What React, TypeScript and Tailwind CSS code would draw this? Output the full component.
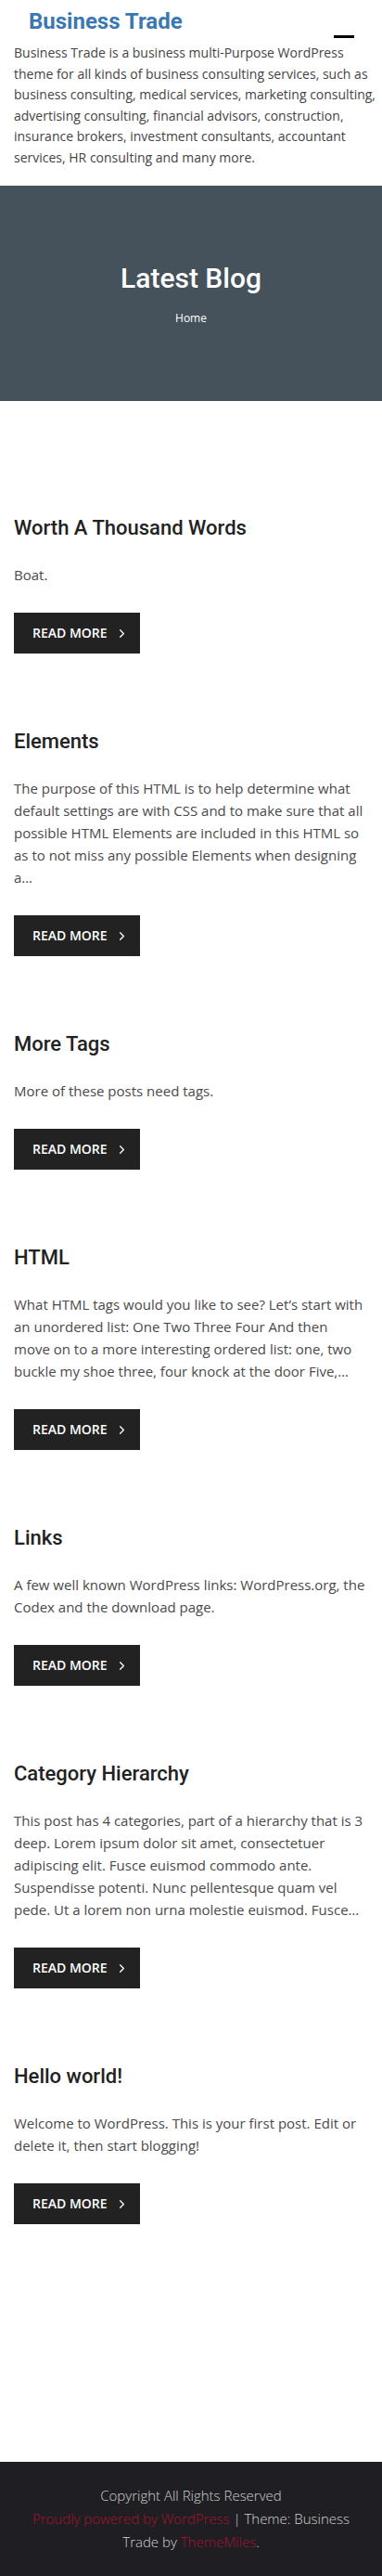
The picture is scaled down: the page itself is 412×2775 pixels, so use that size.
import React from 'react';
import { ChevronRight } from 'lucide-react';

interface Post {
  title: string;
  excerpt: string;
}

const posts: Post[] = [
  { title: 'Worth A Thousand Words', excerpt: 'Boat.' },
  {
    title: 'Elements',
    excerpt:
      'The purpose of this HTML is to help determine what default settings are with CSS and to make sure that all possible HTML Elements are included in this HTML so as to not miss any possible Elements when designing a…',
  },
  { title: 'More Tags', excerpt: 'More of these posts need tags.' },
  {
    title: 'HTML',
    excerpt:
      'What HTML tags would you like to see? Let’s start with an unordered list: One Two Three Four And then move on to a more interesting ordered list: one, two buckle my shoe three, four knock at the door Five,…',
  },
  { title: 'Links', excerpt: 'A few well known WordPress links: WordPress.org, the Codex and the download page.' },
  {
    title: 'Category Hierarchy',
    excerpt:
      'This post has 4 categories, part of a hierarchy that is 3 deep. Lorem ipsum dolor sit amet, consectetuer adipiscing elit. Fusce euismod commodo ante. Suspendisse potenti. Nunc pellentesque quam vel pede. Ut a lorem non urna molestie euismod. Fusce…',
  },
  { title: 'Hello world!', excerpt: 'Welcome to WordPress. This is your first post. Edit or delete it, then start blogging!' },
];

const PostCard: React.FC<{ post: Post }> = ({ post }) => (
  <article className="mb-[82px]">
    <h2 className="font-['Roboto',sans-serif] text-[22px] leading-[26px] font-medium text-[#222]">{post.title}</h2>
    <p className="mt-[25px] max-w-[380px] text-[15px] leading-6 text-[#4a4a4a]">{post.excerpt}</p>
    <a
      href="#"
      className="mt-[29px] flex h-[44px] w-[136px] items-center bg-[#222] pl-5 text-[14px] leading-5 font-semibold uppercase text-white"
    >
      <span>Read More</span>
      <ChevronRight size={15} strokeWidth={2} className="ml-[8px]" />
    </a>
  </article>
);

export default function App() {
  return (
    <div className="min-h-screen bg-white font-['Open_Sans',sans-serif]">
      <header className="pl-[15px] pr-[6px] pb-[19px]">
        <div className="flex h-[46px] justify-between">
          <h1 className="pl-4 pt-[9px] font-['Roboto',sans-serif] text-[24px] leading-[28px] font-bold text-[#3b78b1]">
            Business Trade
          </h1>
          <button className="mr-[24px] mt-[38px] h-[3px] w-[22px] bg-black" aria-label="menu" />
        </div>
        <p className="text-[14px] leading-[22.5px] text-[#444]">
          Business Trade is a business multi-Purpose WordPress theme for all kinds of business consulting services,
          such as business consulting, medical services, marketing consulting, advertising consulting, financial
          advisors, construction, insurance brokers, investment consultants, accountant services, HR consulting and
          many more.
        </p>
      </header>

      <section className="flex h-[232px] flex-col items-center justify-center bg-[#45525b] text-white">
        <h2 className="mt-[3px] font-['Roboto',sans-serif] text-[30px] leading-9 font-medium">Latest Blog</h2>
        <p className="mt-[15px] text-[12px] leading-5">Home</p>
      </section>

      <main className="px-[15px] pt-[124px] pb-[174px]">
        {posts.map((post) => (
          <PostCard key={post.title} post={post} />
        ))}
      </main>

      <footer className="bg-[#1f1f23] px-[15px] pt-[24px] pb-[24px] text-center text-[15px] leading-[25px] text-[#cfcfcf] font-light">
        <p>Copyright All Rights Reserved</p>
        <p>
          <a href="#" className="text-[#a8102f]">Proudly powered by WordPress</a>
          <span> | Theme: Business</span> <span>Trade by</span>{' '}
          <a href="#" className="text-[#a8102f]">ThemeMiles</a>.
        </p>
      </footer>
    </div>
  );
}
